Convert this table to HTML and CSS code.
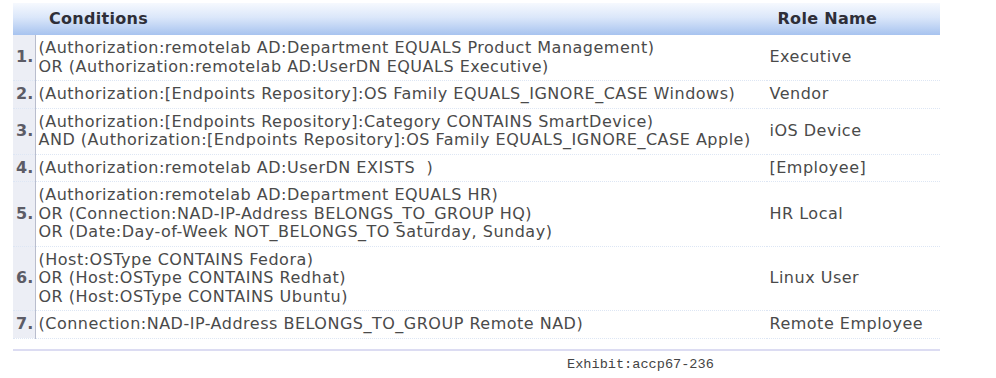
FILE: index.html
```html
<!DOCTYPE html>
<html>
<head>
<meta charset="utf-8">
<link rel="stylesheet" href="styles.css">
</head>
<body>
<div class="wrap">
<table class="rules">
  <thead>
    <tr>
      <th class="h-cond" colspan="2">Conditions</th>
      <th class="h-role">Role Name</th>
    </tr>
  </thead>
  <tbody>
    <tr>
      <td class="num">1.</td>
      <td class="cond">(Authorization:remotelab AD:Department EQUALS Product Management)<br>OR (Authorization:remotelab AD:UserDN EQUALS Executive)</td>
      <td class="role">Executive</td>
    </tr>
    <tr>
      <td class="num">2.</td>
      <td class="cond">(Authorization:[Endpoints Repository]:OS Family EQUALS_IGNORE_CASE Windows)</td>
      <td class="role">Vendor</td>
    </tr>
    <tr>
      <td class="num">3.</td>
      <td class="cond">(Authorization:[Endpoints Repository]:Category CONTAINS SmartDevice)<br>AND (Authorization:[Endpoints Repository]:OS Family EQUALS_IGNORE_CASE Apple)</td>
      <td class="role">iOS Device</td>
    </tr>
    <tr>
      <td class="num">4.</td>
      <td class="cond">(Authorization:remotelab AD:UserDN EXISTS &nbsp;)</td>
      <td class="role">[Employee]</td>
    </tr>
    <tr>
      <td class="num">5.</td>
      <td class="cond">(Authorization:remotelab AD:Department EQUALS HR)<br>OR (Connection:NAD-IP-Address BELONGS_TO_GROUP HQ)<br>OR (Date:Day-of-Week NOT_BELONGS_TO Saturday, Sunday)</td>
      <td class="role">HR Local</td>
    </tr>
    <tr>
      <td class="num">6.</td>
      <td class="cond">(Host:OSType CONTAINS Fedora)<br>OR (Host:OSType CONTAINS Redhat)<br>OR (Host:OSType CONTAINS Ubuntu)</td>
      <td class="role">Linux User</td>
    </tr>
    <tr>
      <td class="num">7.</td>
      <td class="cond">(Connection:NAD-IP-Address BELONGS_TO_GROUP Remote NAD)</td>
      <td class="role">Remote Employee</td>
    </tr>
  </tbody>
</table>
<div class="footer-line"></div>
<div class="exhibit">Exhibit:accp67-236</div>
</div>
</body>
</html>
```

FILE: styles.css
```css
html, body {
  margin: 0;
  padding: 0;
  background: #ffffff;
}
body {
  font-family: "DejaVu Sans", Verdana, sans-serif;
  color: #4a4a4a;
}
.wrap {
  padding: 3px 0 0 13px;
  width: 927px;
}
.rules {
  width: 927px;
  border-collapse: collapse;
  font-size: 16px;
  letter-spacing: 0.5px;
  line-height: 18.5px;
}
.rules th {
  height: 32px;
  padding: 0;
  background: linear-gradient(to bottom, #f6f9fe 0%, #dbe7fa 45%, #a7c3ef 100%);
  color: #2e2e38;
  font-weight: bold;
  text-align: left;
  font-size: 16px;
  letter-spacing: 0.3px;
}
.h-cond {
  padding-left: 36px !important;
}
.h-role {
  padding-left: 11px !important;
}
.rules td {
  padding: 4px 0;
  border-bottom: 1px dotted #dde6f4;
  vertical-align: middle;
  white-space: nowrap;
}
.num {
  width: 22px;
  padding-left: 3px !important;
  background: #eceef5;
  border-right: 1px solid #b9bdcd;
  font-weight: bold;
  color: #5c5c66;
  letter-spacing: 0;
  box-sizing: border-box;
}
.cond {
  padding-left: 3px !important;
  width: 728px;
}
.role {
  padding-left: 3px !important;
}
.footer-line {
  margin-top: 10px;
  height: 2px;
  background: #dcdcf2;
  width: 927px;
}
.exhibit {
  margin: 6px 0 0 554px;
  font-family: "Liberation Mono", "Courier New", monospace;
  font-size: 13.6px;
  color: #444;
}
```
